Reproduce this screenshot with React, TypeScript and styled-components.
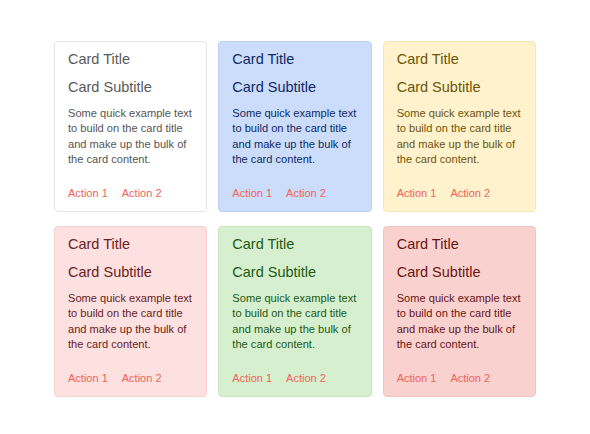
import React from "react";
import styled, { createGlobalStyle } from "styled-components";

const Global = createGlobalStyle`
  html, body { margin: 0; padding: 0; background: #ffffff; }
  body { font-family: "Liberation Sans", Arial, sans-serif; }
`;

type Tone = { bg: string; border: string; text: string; body: string };

const tones: Tone[] = [
  { bg: "#ffffff", border: "#e6e6e6", text: "#5a5a5a", body: "#555555" },
  { bg: "#ccdcfb", border: "#bccff5", text: "#0d2a66", body: "#0d2a66" },
  { bg: "#fff2cc", border: "#f7e6b6", text: "#6e5409", body: "#6e5409" },
  { bg: "#fde0e0", border: "#f6d0d0", text: "#6a2222", body: "#6a2222" },
  { bg: "#d6efcf", border: "#c7e6bf", text: "#1e5a15", body: "#1e5a15" },
  { bg: "#f9d2cf", border: "#f1c3c0", text: "#6b1212", body: "#6b1212" },
];

const Page = styled.div`
  width: 590px;
  height: 434px;
  display: flex;
  align-items: flex-start;
  justify-content: center;
  padding-top: 41px;
  box-sizing: border-box;
`;

const Grid = styled.div`
  width: 482px;
  display: grid;
  grid-template-columns: repeat(3, 1fr);
  column-gap: 11px;
  row-gap: 14px;
`;

const Card = styled.div<{ $tone: Tone }>`
  background: ${(p) => p.$tone.bg};
  border: 1px solid ${(p) => p.$tone.border};
  border-radius: 4px;
  padding: 8px 13px 10px 13px;
  display: flex;
  flex-direction: column;
  color: ${(p) => p.$tone.text};
`;

const Title = styled.div`
  font-size: 14.5px;
  line-height: 18px;
`;

const Subtitle = styled.div`
  font-size: 14.5px;
  line-height: 18px;
  margin-top: 10px;
`;

const Body = styled.p<{ $color: string }>`
  margin: 10px 0 0 0;
  font-size: 11.1px;
  line-height: 15.3px;
  color: ${(p) => p.$color};
`;

const Actions = styled.div`
  display: flex;
  gap: 14px;
  margin-top: 19px;
`;

const Action = styled.span`
  font-size: 11px;
  line-height: 15px;
  color: #f0645a;
`;

export default function App() {
  return (
    <>
      <Global />
      <Page>
        <Grid>
          {tones.map((t, i) => (
            <Card key={i} $tone={t}>
              <Title>Card Title</Title>
              <Subtitle>Card Subtitle</Subtitle>
              <Body $color={t.body}>
                Some quick example text to build on the card title and make up the bulk of the card content.
              </Body>
              <Actions>
                <Action>Action 1</Action>
                <Action>Action 2</Action>
              </Actions>
            </Card>
          ))}
        </Grid>
      </Page>
    </>
  );
}
